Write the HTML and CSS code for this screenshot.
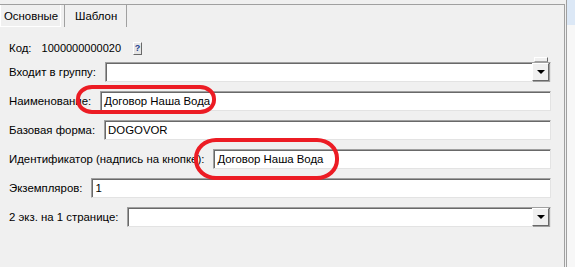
FILE: index.html
```html
<!DOCTYPE html>
<html lang="ru">
<head>
  <meta charset="UTF-8">
  <title>Документ</title>
  <link rel="stylesheet" href="styles.css">
</head>
<body>
  <div class="panel">
    <div class="tabs">
      <div class="tab tab-active">Основные</div>
      <div class="tab">Шаблон</div>
    </div>

    <div class="form">
      <div class="row row-code">
        <span class="label">Код:</span>
        <span class="code-value">1000000000020</span>
        <span class="help-btn">?</span>
      </div>

      <div class="row">
        <span class="label">Входит в группу:</span>
        <div class="field combo">
          <span class="combo-tab"></span>
          <span class="combo-btn"><span class="arrow"></span></span>
        </div>
      </div>

      <div class="row">
        <span class="label">Наименование:</span>
        <div class="field">Договор Наша Вода</div>
      </div>

      <div class="row">
        <span class="label">Базовая форма:</span>
        <div class="field">DOGOVOR</div>
      </div>

      <div class="row">
        <span class="label">Идентификатор (надпись на кнопке):</span>
        <div class="field">Договор Наша Вода</div>
      </div>

      <div class="row">
        <span class="label">Экземпляров:</span>
        <div class="field">1</div>
      </div>

      <div class="row">
        <span class="label">2 экз. на 1 странице:</span>
        <div class="field combo">
          <span class="combo-btn"><span class="arrow"></span></span>
        </div>
      </div>
    </div>
  </div>

  <div class="side"></div>

  <!-- red marks drawn over the form -->
  <div class="mark mark-name"></div>
  <div class="mark mark-ident"></div>
</body>
</html>
```

FILE: styles.css
```css
* {
  box-sizing: border-box;
}

body {
  margin: 0;
  width: 575px;
  height: 267px;
  position: relative;
  display: flex;
  background-color: #f0f0f0;
  font-family: "Liberation Sans", Arial, sans-serif;
  font-size: 11.4px;
  color: #000;
  overflow: hidden;
}

.panel {
  width: 565px;
  margin-top: 4px;
  border-top: 1px solid #a0a0a0;
  border-right: 1px solid #a0a0a0;
}

.side {
  flex: 1;
  margin-left: 1px;
  border-left: 1px solid #a0a0a0;
  background: linear-gradient(#dce8f6 0, #dce8f6 25px, #f7f7f7 25px);
}

.tabs {
  display: flex;
  height: 22px;
}

.tab {
  display: flex;
  align-items: center;
  padding: 0 10px;
  border-left: 1px solid #a0a0a0;
  border-right: 1px solid #a0a0a0;
  margin-left: 3px;
  width: 63px;
}

.tab-active {
  width: 61px;
  margin-left: 0;
  padding: 0 3px;
  border: 1px solid #fff;
  border-top: none;
}

.form {
  display: flex;
  flex-direction: column;
  gap: 9px;
  padding: 14px 13px 0 9px;
}

.row {
  display: flex;
  align-items: center;
  gap: 9px;
}

.row-code {
  height: 14px;
  margin-bottom: -2px;
  gap: 0;
}

.code-value {
  margin-left: 10px;
  font-size: 11px;
}

.help-btn {
  width: 9px;
  height: 13px;
  margin-left: 12px;
  font-size: 9px;
  font-weight: bold;
  line-height: 11px;
  text-align: center;
  color: #1f3f8f;
  border: 1px solid;
  border-color: #fff #696969 #696969 #fff;
  background-color: #e6e6e6;
}

.field {
  flex: 1;
  height: 20px;
  display: flex;
  align-items: center;
  padding: 0 3px;
  background-color: #fff;
  border: 1px solid;
  border-color: #a0a0a0 #e3e3e3 #e3e3e3 #a0a0a0;
  box-shadow: inset 1px 1px 0 #696969;
}

.combo {
  position: relative;
  justify-content: flex-end;
  padding: 0;
}

.combo-btn {
  width: 17px;
  height: 18px;
  display: flex;
  align-items: center;
  justify-content: center;
  background-color: #f0f0f0;
  border: 1px solid;
  border-color: #fff #696969 #696969 #fff;
  box-shadow: 1px 1px 0 #a0a0a0;
  margin-right: 1px;
}

.arrow {
  width: 0;
  height: 0;
  border-left: 4px solid transparent;
  border-right: 4px solid transparent;
  border-top: 4px solid #000;
}

.combo-tab {
  position: absolute;
  right: 2px;
  top: -6px;
  width: 14px;
  height: 5px;
  background-color: #f0f0f0;
  border: 1px solid;
  border-color: #fff #696969 #a0a0a0 #fff;
}

.mark {
  position: absolute;
  border: 4px solid #ec1c24;
}

.mark-name {
  left: 76px;
  top: 85px;
  width: 140px;
  height: 29px;
  border-radius: 16px / 14px;
}

.mark-ident {
  left: 194px;
  top: 138px;
  width: 145px;
  height: 42px;
  border-radius: 22px / 20px;
}
```
